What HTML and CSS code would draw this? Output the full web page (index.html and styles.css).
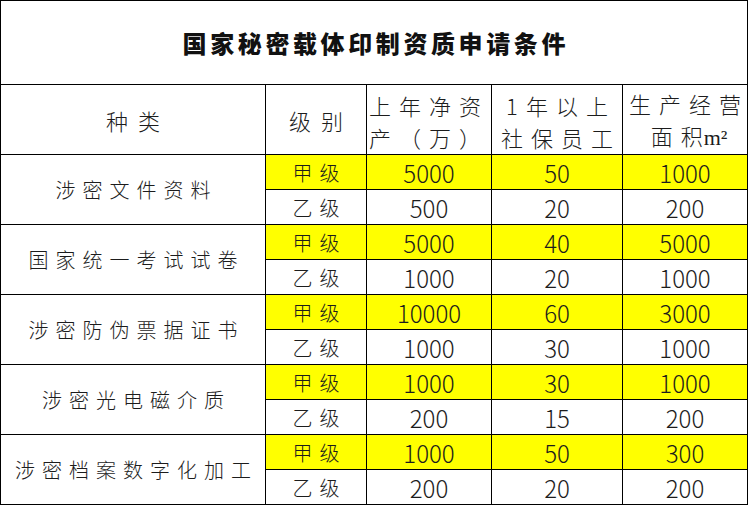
FILE: index.html
```html
<!DOCTYPE html>
<html lang="zh-CN">
<head>
<meta charset="utf-8">
<title>国家秘密载体印制资质申请条件</title>
<link rel="stylesheet" href="styles.css">
</head>
<body>
<div class="sheet">
  <div class="cell title">国家秘密载体印制资质申请条件</div>

  <div class="cell head wide">种类</div>
  <div class="cell head wide">级别</div>
  <div class="cell head two tight"><span>上年净资</span><span>产（万）</span></div>
  <div class="cell head two"><span>1年以上</span><span>社保员工</span></div>
  <div class="cell head two"><span>生产经营</span><span><span class="sp">面</span><span class="ns">积</span><span class="unit">m²</span></span></div>

  <div class="cell cat">涉密文件资料</div>
  <div class="cell lvl hl">甲级</div><div class="cell num hl">5000</div><div class="cell num hl">50</div><div class="cell num hl">1000</div>
  <div class="cell lvl">乙级</div><div class="cell num">500</div><div class="cell num">20</div><div class="cell num">200</div>

  <div class="cell cat">国家统一考试试卷</div>
  <div class="cell lvl hl">甲级</div><div class="cell num hl">5000</div><div class="cell num hl">40</div><div class="cell num hl">5000</div>
  <div class="cell lvl">乙级</div><div class="cell num">1000</div><div class="cell num">20</div><div class="cell num">1000</div>

  <div class="cell cat">涉密防伪票据证书</div>
  <div class="cell lvl hl">甲级</div><div class="cell num hl">10000</div><div class="cell num hl">60</div><div class="cell num hl">3000</div>
  <div class="cell lvl">乙级</div><div class="cell num">1000</div><div class="cell num">30</div><div class="cell num">1000</div>

  <div class="cell cat">涉密光电磁介质</div>
  <div class="cell lvl hl">甲级</div><div class="cell num hl">1000</div><div class="cell num hl">30</div><div class="cell num hl">1000</div>
  <div class="cell lvl">乙级</div><div class="cell num">200</div><div class="cell num">15</div><div class="cell num">200</div>

  <div class="cell cat">涉密档案数字化加工</div>
  <div class="cell lvl hl">甲级</div><div class="cell num hl">1000</div><div class="cell num hl">50</div><div class="cell num hl">300</div>
  <div class="cell lvl">乙级</div><div class="cell num">200</div><div class="cell num">20</div><div class="cell num">200</div>
</div>
</body>
</html>
```

FILE: styles.css
```css
html, body {
  margin: 0;
  padding: 0;
  background: #ffffff;
}

.sheet {
  width: 748px;
  display: grid;
  grid-template-columns: 264px 100px 124px 130px 124px;
  grid-template-rows: 83px 69px repeat(10, 34px);
  gap: 1px;
  border: 1px solid #000;
  box-sizing: border-box;
  background: #000;
  color: #1c1c1c;
  font-family: "Noto Sans CJK SC", "Noto Sans", sans-serif;
  font-weight: 300;
}

.cell {
  background: #ffffff;
  display: flex;
  align-items: center;
  justify-content: center;
  white-space: nowrap;
}

.hl {
  background: #ffff00;
}

.title {
  grid-column: 1 / -1;
  font-size: 24px;
  font-weight: 900;
  letter-spacing: 3.6px;
  text-indent: 3.6px;
  color: #111;
}

.head {
  font-size: 22px;
  letter-spacing: 8px;
  padding-left: 8px;
}

.head.wide {
  letter-spacing: 10px;
  padding-left: 10px;
}

.head.two {
  flex-direction: column;
  line-height: 32px;
  padding-top: 2px;
}

.head.tight {
  padding-left: 0;
}

.sp {
  letter-spacing: 8px;
}

.ns {
  letter-spacing: 1px;
}

.unit {
  font-family: "Liberation Serif", serif;
  font-weight: 400;
  letter-spacing: 0;
  font-size: 22px;
}

.cat {
  grid-row: span 2;
  font-size: 20px;
  letter-spacing: 7px;
  padding-left: 7px;
}

.lvl {
  font-size: 20px;
  letter-spacing: 7px;
  padding-left: 7px;
}

.num {
  font-size: 24px;
  font-weight: 300;
}
```
